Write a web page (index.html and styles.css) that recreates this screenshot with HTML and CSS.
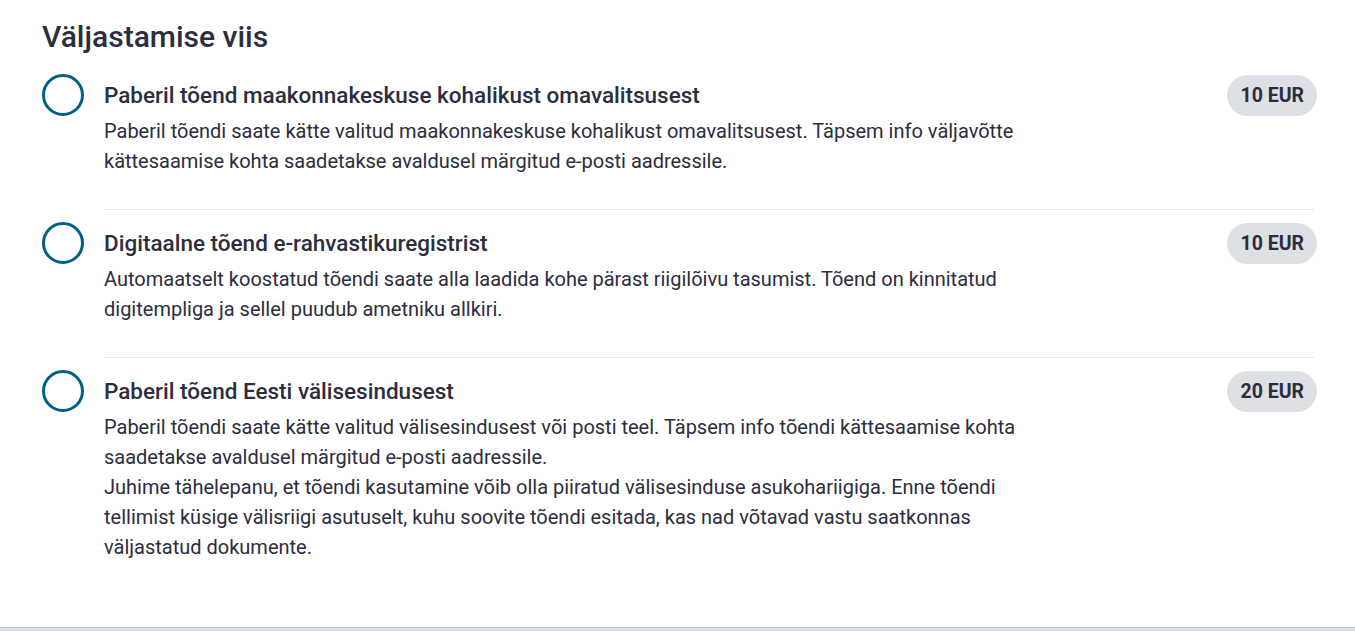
FILE: index.html
```html
<!DOCTYPE html>
<html lang="et">
<head>
  <meta charset="UTF-8"/>
  <meta name="viewport" content="width=device-width, initial-scale=1.0"/>
  <title>Väljastamise viis</title>
  <link rel="stylesheet" href="styles.css">
</head>
<body>
  <div class="page">
    <h1>Väljastamise viis</h1>

    <div class="options">
      <label class="option">
        <span class="radio"></span>
        <div class="option-main">
          <div class="option-head">
            <span class="option-title">Paberil tõend maakonnakeskuse kohalikust omavalitsusest</span>
            <span class="price">10 EUR</span>
          </div>
          <p class="option-desc">Paberil tõendi saate kätte valitud maakonnakeskuse kohalikust omavalitsusest. Täpsem info väljavõtte kättesaamise kohta saadetakse avaldusel märgitud e-posti aadressile.</p>
        </div>
      </label>

      <div class="divider"></div>

      <label class="option">
        <span class="radio"></span>
        <div class="option-main">
          <div class="option-head">
            <span class="option-title">Digitaalne tõend e-rahvastikuregistrist</span>
            <span class="price">10 EUR</span>
          </div>
          <p class="option-desc">Automaatselt koostatud tõendi saate alla laadida kohe pärast riigilõivu tasumist. Tõend on kinnitatud digitempliga ja sellel puudub ametniku allkiri.</p>
        </div>
      </label>

      <div class="divider"></div>

      <label class="option">
        <span class="radio"></span>
        <div class="option-main">
          <div class="option-head">
            <span class="option-title">Paberil tõend Eesti välisesindusest</span>
            <span class="price">20 EUR</span>
          </div>
          <p class="option-desc">Paberil tõendi saate kätte valitud välisesindusest või posti teel. Täpsem info tõendi kättesaamise kohta saadetakse avaldusel märgitud e-posti aadressile.<br>Juhime tähelepanu, et tõendi kasutamine võib olla piiratud välisesinduse asukohariigiga. Enne tõendi tellimist küsige välisriigi asutuselt, kuhu soovite tõendi esitada, kas nad võtavad vastu saatkonnas väljastatud dokumente.</p>
        </div>
      </label>
    </div>
  </div>
  <div class="footer-band"></div>
</body>
</html>
```

FILE: styles.css
```css
body {
  margin: 0;
  background-color: #fff;
  color: #2c2d3e;
  font-family: Roboto, "Liberation Sans", sans-serif;
}
.page {
  padding: 20px 38px 0 42px;
  height: 627px;
  box-sizing: border-box;
}
h1 {
  margin: 0 0 20px;
  font-size: 30px;
  line-height: 34px;
  font-weight: 500;
}
.option {
  display: flex;
  align-items: flex-start;
  padding-bottom: 33px;
  cursor: pointer;
}
.radio {
  flex: none;
  width: 42px;
  height: 42px;
  border: 3px solid #005e87;
  border-radius: 50%;
  box-sizing: border-box;
  margin-right: 20px;
}
.option-main {
  flex: 1;
}
.option-head {
  display: flex;
  justify-content: space-between;
  align-items: center;
  height: 42px;
}
.option-title {
  font-size: 22.5px;
  font-weight: 500;
}
.price {
  background-color: #dde0e4;
  border-radius: 21px;
  height: 41px;
  line-height: 41px;
  padding: 0 13px;
  font-size: 19.5px;
  font-weight: 700;
  color: #2c2d3e;
}
.option-desc {
  margin: 0;
  width: 930px;
  font-size: 20px;
  line-height: 30px;
}
.divider {
  margin: 0 4px 12px 62px;
  border-top: 1px dotted #d4d4d4;
}
.footer-band {
  border-top: 1px solid #c4c8cc;
  background-color: #dde1e5;
  height: 10px;
}
```
